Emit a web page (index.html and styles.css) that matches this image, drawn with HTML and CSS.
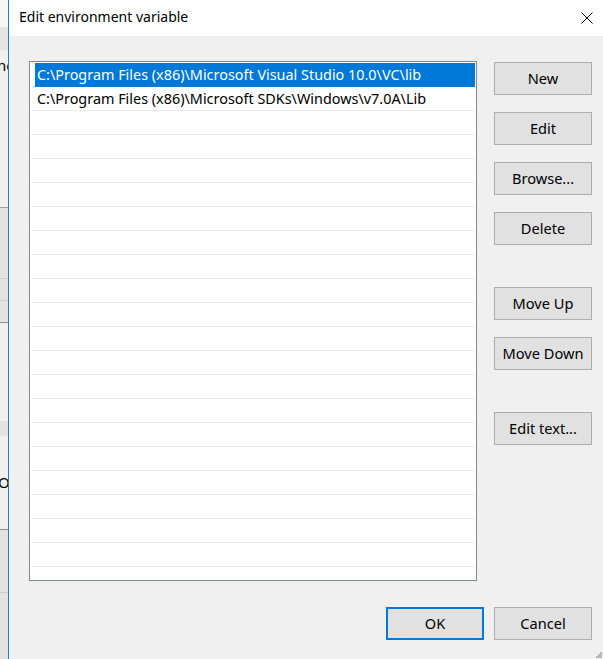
FILE: index.html
```html
<!DOCTYPE html>
<html>
<head>
<meta charset="utf-8">
<link rel="stylesheet" href="styles.css">
</head>
<body>
<div class="screen">
  <div class="bgwin">
    <div class="bg-top"></div>
    <div class="bg-band1"></div>
    <div class="bg-light1"><span class="bg-text">ne</span></div>
    <div class="bg-gray1"></div>
    <div class="bg-gray2"></div>
    <div class="bg-gray3"></div>
    <div class="bg-light2"></div>
    <div class="bg-band2"></div>
    <div class="bg-light3"><span class="bg-text2">O</span></div>
    <div class="bg-gray4"></div>
    <div class="bg-gray5"></div>
  </div>
  <div class="dialog">
    <div class="titlebar">
      <span class="title">Edit environment variable</span>
      <svg class="close" width="12" height="12" viewBox="0 0 12 12"><path d="M0.5 0.5 L11.5 11.5 M11.5 0.5 L0.5 11.5" stroke="#000" stroke-width="1" fill="none"/></svg>
    </div>
    <div class="body">
      <div class="main">
        <div class="list">
          <div class="row sel"><span class="cell">C:\Program Files (x86)\Microsoft Visual Studio 10.0\VC\lib</span></div>
          <div class="row"><span class="cell">C:\Program Files (x86)\Microsoft SDKs\Windows\v7.0A\Lib</span></div>
          <div class="row"></div><div class="row"></div><div class="row"></div><div class="row"></div>
          <div class="row"></div><div class="row"></div><div class="row"></div><div class="row"></div>
          <div class="row"></div><div class="row"></div><div class="row"></div><div class="row"></div>
          <div class="row"></div><div class="row"></div><div class="row"></div><div class="row"></div>
          <div class="row"></div><div class="row"></div><div class="row"></div>
        </div>
        <div class="buttons">
          <div class="btn">New</div>
          <div class="btn">Edit</div>
          <div class="btn">Browse...</div>
          <div class="btn">Delete</div>
          <div class="btn sep">Move Up</div>
          <div class="btn">Move Down</div>
          <div class="btn sep">Edit text...</div>
        </div>
      </div>
      <div class="footer">
        <div class="btn default">OK</div>
        <div class="btn">Cancel</div>
      </div>
    </div>
    <svg class="grip" width="6" height="6" viewBox="0 0 6 6">
      <rect x="4" y="0" width="2" height="2" fill="#b8b8b8"/>
      <rect x="2" y="2" width="2" height="2" fill="#b8b8b8"/>
      <rect x="4" y="2" width="2" height="2" fill="#b8b8b8"/>
      <rect x="0" y="4" width="2" height="2" fill="#b8b8b8"/>
      <rect x="2" y="4" width="2" height="2" fill="#b8b8b8"/>
      <rect x="4" y="4" width="2" height="2" fill="#b8b8b8"/>
    </svg>
  </div>
</div>
</body>
</html>
```
FILE: styles.css
```css
* { box-sizing: border-box; }
html, body { margin: 0; padding: 0; }
body {
  font-family: "Noto Sans", "Open Sans", sans-serif;
  font-size: 14px;
  color: #000;
  background: #f0f0f0;
}
.screen {
  display: flex;
  width: 603px;
  height: 659px;
  overflow: hidden;
}
.bgwin {
  width: 8px;
  flex: none;
  display: flex;
  flex-direction: column;
  overflow: hidden;
  background: #f0f0f0;
}
.bg-top { height: 27px; background: #f7f7f7; }
.bg-band1 { height: 23px; background: #e4e4e4; }
.bg-light1 { height: 157px; background: #f0f0f0; position: relative; overflow: hidden; }
.bg-text { display: block; margin-top: 6px; margin-left: -3px; font-size: 15px; line-height: 18px; white-space: nowrap; }
.bg-gray1 { height: 71px; background: #e3e3e3; border-top: 1px solid #a0a0a0; }
.bg-gray2 { height: 22px; background: #e3e3e3; border-top: 1px solid #cfcfcf; }
.bg-gray3 { height: 22px; background: #e3e3e3; border-top: 1px solid #cfcfcf; }
.bg-light2 { height: 99px; background: #f0f0f0; border-top: 1px solid #8f8f8f; }
.bg-band2 { height: 15px; background: #e3e3e3; }
.bg-light3 { height: 93px; background: #f0f0f0; overflow: hidden; }
.bg-text2 { display: block; margin-top: 38px; margin-left: -2px; font-size: 15px; line-height: 16px; white-space: nowrap; }
.bg-gray4 { height: 63px; background: #e3e3e3; border-top: 1px solid #8f8f8f; }
.bg-gray5 { flex: 1; background: #e3e3e3; border-top: 1px solid #cfcfcf; }

.dialog {
  flex: 1;
  position: relative;
  border-left: 1px solid #1a7fd6;
  background: #f0f0f0;
  display: flex;
  flex-direction: column;
}
.titlebar {
  height: 36px;
  flex: none;
  background: #fff;
  display: flex;
  align-items: center;
  justify-content: space-between;
  padding: 0 10px 0 10px;
}
.title { font-size: 14px; line-height: 20px; margin-top: -3px; }
.close { display: block; margin-top: -1px; }
.body {
  padding: 25px 11px 0 20px;
}
.main {
  display: flex;
  gap: 17px;
}
.list {
  width: 448px;
  height: 520px;
  flex: none;
  border: 1px solid #828790;
  background: #fff;
  padding: 1px 1px 0 1px;
}
.row {
  height: 24px;
  border-bottom: 1px solid #ececec;
  display: flex;
}
.cell {
  flex: 1;
  margin-left: 4px;
  padding-left: 2px;
  height: 24px;
  line-height: 23px;
  white-space: nowrap;
  font-size: 14.4px;
}
.row.sel .cell {
  background: #0078d7;
  color: #fff;
}
.buttons {
  width: 98px;
  flex: none;
  display: flex;
  flex-direction: column;
  gap: 17px;
  margin-top: 1px;
}
.btn {
  width: 98px;
  height: 33px;
  border: 1px solid #adadad;
  background: #e1e1e1;
  display: flex;
  align-items: center;
  justify-content: center;
  padding-bottom: 2px;
  font-size: 14.6px;
  white-space: nowrap;
}
.btn.sep { margin-top: 25px; }
.btn.default { border: 2px solid #0078d7; }
.footer {
  display: flex;
  justify-content: flex-end;
  gap: 10px;
  margin-top: 26px;
}
.grip {
  position: absolute;
  right: 1px;
  bottom: 1px;
}
```
